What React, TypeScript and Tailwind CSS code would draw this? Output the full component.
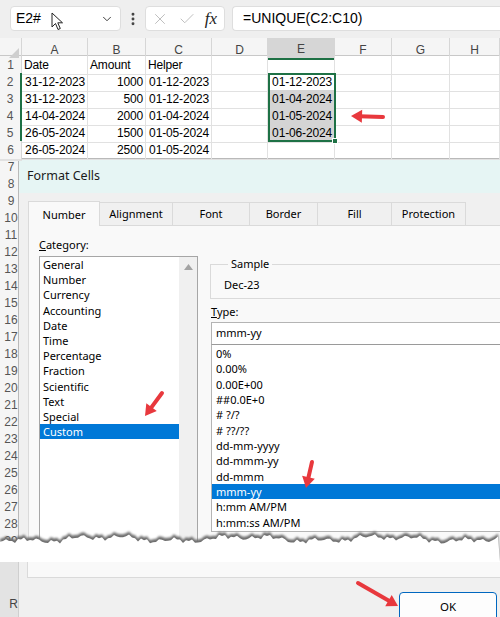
import { ChevronDown, EllipsisVertical, X, Check } from "lucide-react";

const cols = ["A", "B", "C", "D", "E", "F", "G", "H"];
const gridCols = "grid grid-cols-[22px_66px_58px_66px_56px_67px_57px_58px_50px]";

const rows: { cells: string[]; right: boolean }[] = [
  { cells: ["Date", "Amount", "Helper", "", "", "", "", ""], right: false },
  { cells: ["31-12-2023", "1000", "01-12-2023", "", "01-12-2023", "", "", ""], right: true },
  { cells: ["31-12-2023", "500", "01-12-2023", "", "01-04-2024", "", "", ""], right: true },
  { cells: ["14-04-2024", "2000", "01-04-2024", "", "01-05-2024", "", "", ""], right: true },
  { cells: ["26-05-2024", "1500", "01-05-2024", "", "01-06-2024", "", "", ""], right: true },
  { cells: ["26-05-2024", "2500", "01-05-2024", "", "", "", "", ""], right: true },
];

const categories = [
  "General", "Number", "Currency", "Accounting", "Date", "Time",
  "Percentage", "Fraction", "Scientific", "Text", "Special", "Custom",
];

const types = [
  "0%", "0.00%", "0.00E+00", "##0.0E+0", "# ?/?", "# ??/??",
  "dd-mm-yyyy", "dd-mmm-yy", "dd-mmm", "mmm-yy", "h:mm AM/PM", "h:mm:ss AM/PM",
];

const tabs = [
  { label: "Number", w: "w-[72px]" },
  { label: "Alignment", w: "w-[73px]" },
  { label: "Font", w: "w-[77px]" },
  { label: "Border", w: "w-[68px]" },
  { label: "Fill", w: "w-[74px]" },
  { label: "Protection", w: "w-[74px]" },
];

// torn paper edge
const jag: [number, number][] = [];
for (let x = 0; x <= 500; x += 3) {
  const y =
    10 +
    Math.sin(x * 0.045) * 2 +
    Math.sin(x * 0.13 + 1) * 1.6 +
    Math.sin(x * 0.41 + 2) * 1.5 +
    Math.sin(x * 0.97) * 1.1;
  jag.push([x, y]);
}
const pts = (off: number) => jag.map(([x, y]) => `${x},${(y + off).toFixed(1)}`).join(" ");

const Arrow = ({ x1, y1, x2, y2 }: { x1: number; y1: number; x2: number; y2: number }) => {
  const dx = x2 - x1;
  const dy = y2 - y1;
  const len = Math.hypot(dx, dy);
  const ux = dx / len;
  const uy = dy / len;
  const hl = 11;
  const hw = 6.5;
  const bx = x2 - ux * hl;
  const by = y2 - uy * hl;
  return (
    <g>
      <line x1={x1} y1={y1} x2={bx + ux * 3} y2={by + uy * 3} stroke="#e8383d" strokeWidth={4} strokeLinecap="round" />
      <polygon
        points={`${x2},${y2} ${bx - uy * hw},${by + ux * hw} ${bx + uy * hw},${by - ux * hw}`}
        fill="#e8383d"
      />
    </g>
  );
};

export default function App() {
  return (
    <div className="relative w-[500px] h-[617px] overflow-hidden bg-white font-['Liberation_Sans',Arial,sans-serif] text-black">
      {/* formula bar */}
      <div className="h-[38px] bg-[#efefef] flex items-start pt-[6px] pl-[10px]">
        <div className="relative w-[111px] h-[25px] bg-white rounded-[4px] border border-[#dedede] flex items-center pl-[5px] pr-[6px]">
          <span className="text-[14px]">E2#</span>
          <svg className="absolute left-[40px] top-[5px]" width="13" height="19" viewBox="0 0 13 19">
            <path d="M1 1 L1 15 L4.5 11.5 L7 17.5 L9.3 16.5 L6.8 10.8 L11.5 10.8 Z" fill="white" stroke="#222" strokeWidth="1" strokeLinejoin="round" />
          </svg>
          <ChevronDown className="ml-auto text-[#333]" size={14} strokeWidth={1.6} />
        </div>
        <div className="w-[24px] h-[25px] flex items-center justify-center">
          <EllipsisVertical size={16} strokeWidth={2.4} className="text-[#444]" />
        </div>
        <div className="w-[80px] h-[25px] bg-white rounded-[4px] border border-[#dedede] flex items-center px-[5px] justify-between">
          <X size={18} strokeWidth={1.2} className="text-[#b8b8b8]" />
          <Check size={18} strokeWidth={1.2} className="text-[#b8b8b8]" />
          <span className="font-['Liberation_Serif',serif] italic text-[17px] text-[#222] pr-[2px]">fx</span>
        </div>
        <div className="ml-[7px] flex-1 h-[25px] bg-white rounded-l-[4px] border border-r-0 border-[#dedede] flex items-center pl-[10px] text-[14px]">
          =UNIQUE(C2:C10)
        </div>
      </div>

      {/* sheet */}
      <div className="relative text-[12px]">
        <div className={`${gridCols} h-[18px] bg-[#f5f5f5] border-b border-[#c8c8c8] text-[#444]`}>
          <div className="relative border-r border-[#d6d6d6]">
            <svg className="absolute right-[2px] bottom-[2px]" width="10" height="10" viewBox="0 0 10 10">
              <path d="M10 0 L10 10 L0 10 Z" fill="#cfcfcf" />
            </svg>
          </div>
          {cols.map((c) => (
            <div
              key={c}
              className={`flex items-center justify-center border-r border-[#d6d6d6] pt-[2px] ${
                c === "E" ? "bg-[#d6d6d6] border-b-2 border-b-[#1e7145]" : ""
              }`}
            >
              {c}
            </div>
          ))}
        </div>
        {rows.map((r, i) => (
          <div key={i} className={`${gridCols} h-[17px]`}>
            <div
              className={`flex items-center justify-center bg-[#f5f5f5] text-[#555] border-b border-[#e1e1e1] ${
                i >= 1 && i <= 4 ? "border-r-2 border-r-[#1e7145]" : "border-r border-r-[#d6d6d6]"
              }`}
            >
              {i + 1}
            </div>
            {r.cells.map((c, j) => (
              <div
                key={j}
                className={`flex items-center px-[2px] tracking-[-0.15px] border-r border-b border-[#e1e1e1] whitespace-nowrap overflow-hidden ${
                  r.right ? "justify-end" : "justify-start"
                } ${j === 4 && i >= 2 && i <= 4 ? "bg-[#d4d4d4]" : ""}`}
              >
                {c}
              </div>
            ))}
            <div className="border-b border-[#e1e1e1]" />
          </div>
        ))}
        {/* selection E2:E5 */}
        <div className="absolute left-[268px] top-[35px] w-[68px] h-[69px] border-2 border-[#1e7145]">
          <div className="absolute -right-[4px] -bottom-[4px] w-[6px] h-[6px] bg-[#1e7145] border border-white" />
        </div>
      </div>

      {/* dialog area */}
      <div className="flex h-[404px] overflow-hidden">
        <div className="w-[18px] shrink-0 overflow-hidden bg-[#f5f5f5]">
          {Array.from({ length: 23 }, (_, k) => (
            <div key={k} className="w-[22px] h-[17px] flex items-center justify-center text-[12px] text-[#555]">
              {k + 7}
            </div>
          ))}
        </div>
        <div className="flex-1 flex flex-col bg-[#f0f0f0] border-l border-t border-[#b9b9b9] font-['Noto_Sans','Open_Sans',sans-serif] min-w-0">
          <div className="h-[34px] shrink-0 bg-[#e6f5f4] flex items-center pl-[8px] text-[12.5px] text-[#1a1a1a]">
            Format Cells
          </div>
          <div className="flex items-end h-[32px] shrink-0 pl-[9px] text-[11px]">
            {tabs.map((t, k) => (
              <div
                key={t.label}
                className={`${t.w} shrink-0 flex items-center justify-center border-t border-r border-[#dadada] ${
                  k === 0
                    ? "h-[25px] bg-[#f9f9f9] border-l relative -mb-px z-10 pt-[2px]"
                    : "h-[23px] bg-[#f0f0f0]"
                }`}
              >
                {t.label}
              </div>
            ))}
          </div>
          <div className="ml-[9px] flex-1 min-h-0 overflow-hidden bg-[#f9f9f9] border-t border-l border-[#dadada] flex pl-[10px] text-[11px] min-w-0">
            {/* category */}
            <div className="w-[159px] shrink-0 pt-[10px]">
              <div className="h-[17px] leading-[17px]">
                <span className="underline">C</span>ategory:
              </div>
              <div className="mt-[3px] h-[300px] bg-white border border-[#a6a6a6] flex">
                <div className="flex-1">
                  {categories.map((c) => (
                    <div
                      key={c}
                      className={`h-[15.2px] leading-[15.2px] pl-[3px] ${
                        c === "Custom" ? "bg-[#0078d7] text-white" : ""
                      }`}
                    >
                      {c}
                    </div>
                  ))}
                </div>
                <div className="w-[18px] bg-[#f0f0f0] flex justify-center pt-[7px]">
                  <svg width="9" height="6" viewBox="0 0 9 6">
                    <path d="M4.5 0 L9 6 L0 6 Z" fill="#a3a3a3" />
                  </svg>
                </div>
              </div>
            </div>
            {/* sample & type */}
            <div className="ml-[12px] w-[300px] shrink-0 pt-[31px]">
              <fieldset className="border border-[#dadada] pl-[13px] pb-[5px] pt-[6px]">
                <legend className="ml-[4px] px-[3px] text-[11px] leading-[14px]">Sample</legend>
                <div className="leading-[16px]">Dec-23</div>
              </fieldset>
              <div className="mt-[5px] h-[16px] leading-[16px] ml-[1px]">
                <span className="underline">T</span>ype:
              </div>
              <div className="mt-[2px] ml-[1px] h-[23px] bg-white border border-[#b4b4b4] border-b-[#9a9a9a] flex items-center pl-[4px]">
                mmm-yy
              </div>
              <div className="ml-[1px] h-[187px] bg-white border border-t-0 border-[#b4b4b4] pt-[1px]">
                {types.map((t) => (
                  <div
                    key={t}
                    className={`h-[15.35px] leading-[15.35px] pl-[4px] ${
                      t === "mmm-yy" ? "bg-[#0078d7] text-white" : ""
                    }`}
                  >
                    {t}
                  </div>
                ))}
              </div>
            </div>
          </div>
        </div>
      </div>

      {/* lower slice */}
      <div className="flex h-[55px] font-['Noto_Sans','Open_Sans',sans-serif]">
        <div className="w-[18px] shrink-0 bg-[#e3e3e3] flex items-end justify-end pb-[4px] text-[12px] text-[#444] font-['Liberation_Sans',sans-serif]">
          R
        </div>
        <div className="flex-1 bg-[#f0f0f0] border-l border-[#cfcfcf] flex flex-col">
          <div className="ml-[8px] h-[16px] shrink-0 bg-[#f9f9f9] border-l border-b border-[#dadada]" />
          <div className="flex justify-end pr-[3px] mt-[14px] shrink-0">
            <div className="w-[98px] h-[30px] bg-[#fdfdfd] border border-[#0067c0] rounded-[4px] flex items-start justify-center pt-[5px] text-[11.5px]">
              OK
            </div>
          </div>
        </div>
      </div>

      {/* torn edge */}
      <svg className="absolute left-0 top-[526px]" width="500" height="36" viewBox="0 0 500 36">
        <defs>
          <filter id="blur" x="-5%" y="-50%" width="110%" height="200%">
            <feGaussianBlur stdDeviation="1.2" />
          </filter>
        </defs>
        <polygon points={`0,36 ${pts(0)} 500,36`} fill="#6e6e6e" filter="url(#blur)" />
        <polygon points={`0,36 ${pts(3)} 500,36`} fill="white" />
      </svg>

      {/* arrows */}
      <svg className="absolute left-0 top-0 pointer-events-none" width="500" height="617" viewBox="0 0 500 617">
        <Arrow x1={383} y1={117} x2={351} y2={116} />
        <Arrow x1={162} y1={393} x2={145} y2={416} />
        <Arrow x1={312} y1={462} x2={306} y2={488} />
        <Arrow x1={358} y1={583} x2={398} y2={606} />
      </svg>
    </div>
  );
}
